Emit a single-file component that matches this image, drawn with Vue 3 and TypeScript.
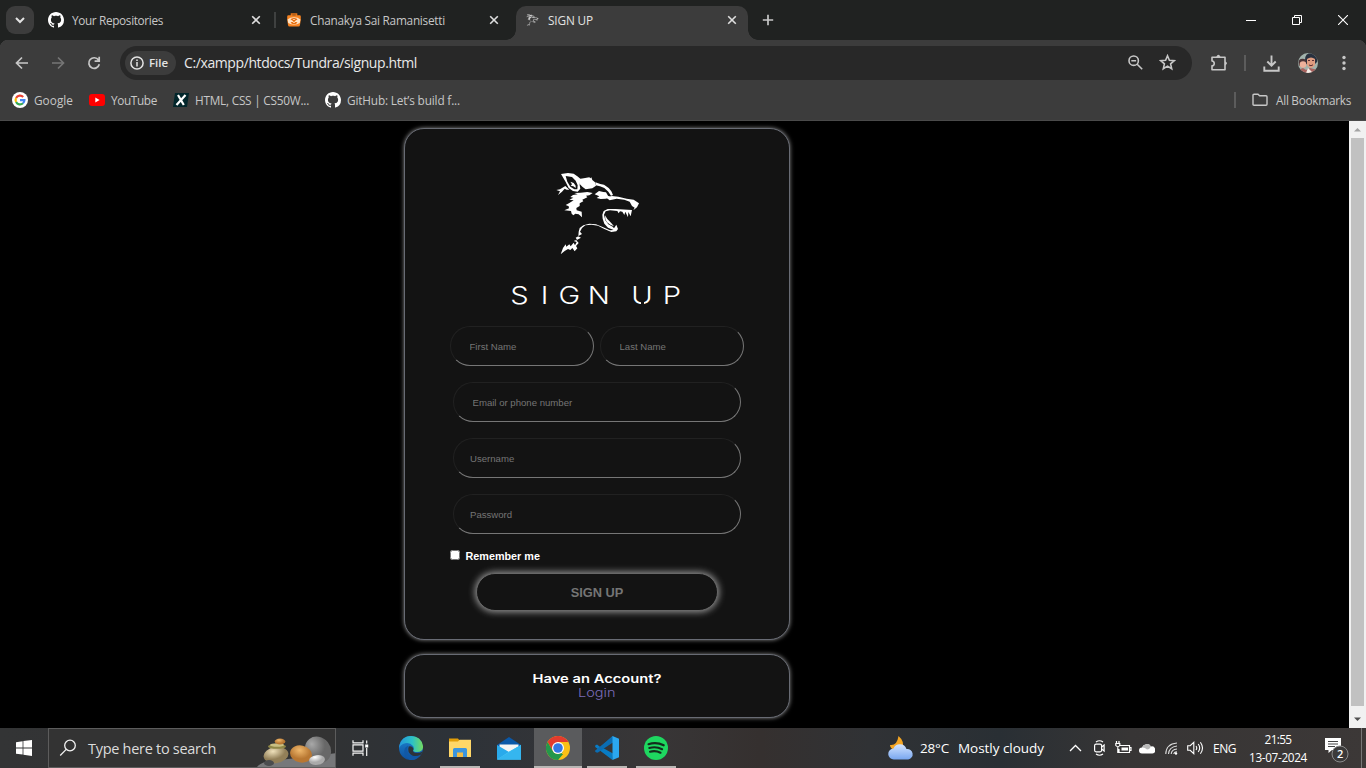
<script setup lang="ts">
import { reactive, type Directive } from 'vue'

interface TabItem { kind: 'github' | 'bag' | 'wolf'; title: string; width: number; active?: boolean }
interface Bookmark { kind: 'google' | 'youtube' | 'edx' | 'github'; label: string; width: number }

const tabs: TabItem[] = [
  { kind: 'github', title: 'Your Repositories', width: 91 },
  { kind: 'bag', title: 'Chanakya Sai Ramanisetti', width: 135 },
  { kind: 'wolf', title: 'SIGN UP', width: 45, active: true },
]
const bookmarks: Bookmark[] = [
  { kind: 'google', label: 'Google', width: 39 },
  { kind: 'youtube', label: 'YouTube', width: 46 },
  { kind: 'edx', label: 'HTML, CSS | CS50W...', width: 114 },
  { kind: 'github', label: 'GitHub: Let’s build f...', width: 113 },
]
const form = reactive({ first: '', last: '', contact: '', user: '', pass: '', remember: false })

// Tracks a label so that it fills the given width.
const vFit: Directive<HTMLElement, number> = {
  mounted(el, { value }) {
    const natural = el.getBoundingClientRect().width
    const count = (el.textContent ?? '').trim().length
    el.style.letterSpacing = `${(value - natural) / count}px`
  },
}

const githubPath =
  'M8 0C3.58 0 0 3.58 0 8c0 3.54 2.29 6.53 5.47 7.59.4.07.55-.17.55-.38 0-.19-.01-.82-.01-1.49-2.01.37-2.53-.49-2.69-.94-.09-.23-.48-.94-.82-1.13-.28-.15-.68-.52-.01-.53.63-.01 1.08.58 1.23.82.72 1.21 1.87.87 2.33.66.07-.52.28-.87.51-1.07-1.78-.2-3.64-.89-3.64-3.95 0-.87.31-1.59.82-2.15-.08-.2-.36-1.02.08-2.12 0 0 .67-.21 2.2.82.64-.18 1.32-.27 2-.27s1.36.09 2 .27c1.53-1.04 2.2-.82 2.2-.82.44 1.1.16 1.92.08 2.12.51.56.82 1.27.82 2.15 0 3.07-1.87 3.75-3.65 3.95.29.25.54.73.54 1.48 0 1.07-.01 1.93-.01 2.2 0 .21.15.46.55.38A8.01 8.01 0 0 0 16 8c0-4.42-3.58-8-8-8z'

const wolfPaths: string[] = [
  'M63 42L84 39L101 41L112 49L121 56L119 75L121 86L113 95L99 93L86 84L77 66ZM77 48L82 65L91 80L103 88L112 88L113 76L107 62L96 51Z',
  'M91 65L101 69L107 77L107 84L100 79L92 77L96 73Z',
  'M117 57L131 55L148 52L151 55L154 52L157 60L165 67L168 77L157 85L137 88L127 80L119 72Z',
  'M166 67L181 72L192 74L206 84L214 94L219 105L213 107L205 95L193 84L180 79L167 76Z',
  'M164 103L177 93L190 96L198 97L204 107L213 112L197 116L182 117L170 114L178 109Z',
  'M197 112L216 108L235 110L260 116L281 119L297 130L291 142L280 151L284 143L276 138L269 125L253 119L230 116L209 121Z',
  'M49 90L60 88L76 78L88 89L80 89L74 86L66 95L54 105L60 94Z',
  'M91 111L99 105L113 103L103 99L122 98L142 96L158 99L148 106L138 107L142 112L127 119L130 124L119 130L119 138L109 144L110 151L125 155L126 172L116 163L106 161L100 166L95 161L93 153L73 151L87 145L86 139L77 135L88 129L101 121L88 119L100 113Z',
  'M187 164L191 153L203 147L227 147L276 150L272 169L265 156L264 172L256 155L253 165L247 155L240 154L236 160L232 153L210 151L197 154L192 164L196 181L205 193L218 200L222 205L229 194L234 207L229 214L214 216L193 207L174 197L155 194L136 196L126 204L120 215L126 222L114 229L123 233L109 241L116 249L108 258L112 265L104 274L97 264L91 270L84 267L74 273L62 283L69 264L77 253L79 260L88 253L92 259L101 248L105 256L110 246L101 243L111 239L107 233L115 229L116 215L119 204L130 196L148 191L168 193L188 201L210 211L221 210L204 203L193 191L188 176Z',
  'M195 166L202 177L213 188L222 199L211 194L201 187L196 178Z',
]
</script>

<template>
  <div class="screen">
    <div class="tabstrip">
      <button class="chev"><svg width="12" height="12" viewBox="0 0 12 12"><path d="M2 4l4 4 4-4" fill="none" stroke="#e3e3e3" stroke-width="2" /></svg></button>
      <div v-for="t in tabs" :key="t.title" class="tab" :class="[t.kind, { active: t.active }]">
        <span class="fav">
          <svg v-if="t.kind === 'github'" width="16" height="16" viewBox="0 0 16 16"><path :d="githubPath" fill="#fff" /></svg>
          <svg v-else-if="t.kind === 'bag'" width="14" height="14" viewBox="0 0 14 14">
            <path d="M4.5 3V1h5v2" fill="none" stroke="#e87516" stroke-width="1.6" />
            <path d="M1.500 2.200h11q1.300 0 1.300 1.300v3.300L13 12q-.2 1.500-1.500 1.500h-9Q1.200 13.500 1 12L.2 6.800V3.500q0-1.300 1.300-1.300z" fill="#f58220" />
            <path d="M.6 6.500Q3 4.300 7 4.300t6.400 2.200l-.6 3.500Q10 11.500 7 11.500T1.200 10z" fill="#ffe3c4" />
            <path d="M4.500 6.300q2.500-1.500 5 0l-5 3.400q2.500 1.700 5 0z" fill="none" stroke="#e66c0d" stroke-width="1.100" />
          </svg>
          <svg v-else width="13" height="12" viewBox="45 35 256 252"><path v-for="d in wolfPaths" :key="d" :d="d" fill="#d2d2d2" fill-rule="evenodd" stroke="#bdbdbd" stroke-width="4" /></svg>
        </span>
        <span class="title"><span v-fit="t.width">{{ t.title }}</span></span>
        <svg class="x" width="10" height="10" viewBox="0 0 10 10"><path d="M1.2 1.2l7.6 7.6M8.8 1.2L1.2 8.8" stroke="#dedede" stroke-width="1.6" /></svg>
      </div>
      <svg class="plus" width="12" height="12" viewBox="0 0 12 12"><path d="M6 .8v10.4M.8 6h10.4" stroke="#c7c7c7" stroke-width="1.7" /></svg>
      <div class="wincontrols">
        <span><svg width="10" height="10" viewBox="0 0 10 10"><path d="M0 5.5h10" stroke="#fff" /></svg></span>
        <span><svg width="10" height="10" viewBox="0 0 10 10" fill="none" stroke="#fff"><path d="M.5 2.5h7v7h-7zM2.5 2.5v-2h7v7h-2" /></svg></span>
        <span><svg width="10" height="10" viewBox="0 0 10 10"><path d="M0 0l10 10M10 0L0 10" stroke="#fff" stroke-width="1.1" /></svg></span>
      </div>
    </div>

    <div class="toolbar">
      <span class="slot"><svg width="14" height="14" viewBox="0 0 14 14" fill="none" stroke="#c7c7c7" stroke-width="1.7"><path d="M13 7H2M7 1.5L1.5 7 7 12.5" /></svg></span>
      <span class="slot"><svg width="14" height="14" viewBox="0 0 14 14" fill="none" stroke="#757575" stroke-width="1.7"><path d="M1 7h11M7 1.5L12.5 7 7 12.5" /></svg></span>
      <span class="slot"><svg width="14" height="14" viewBox="0 0 14 14" fill="none" stroke="#c7c7c7" stroke-width="1.7"><path d="M11.5 4A5.3 5.3 0 1 0 12.3 8.3M12.2.7v4.5H7.6" /></svg></span>
      <div class="omnibox">
        <div class="chip">
          <svg width="14" height="14" viewBox="0 0 14 14"><circle cx="7" cy="7" r="6.1" fill="none" stroke="#e3e3e3" stroke-width="1.5" /><path d="M7 6v4.4M7 3.4v1.5" stroke="#e3e3e3" stroke-width="1.5" /></svg>
          <b v-fit="19">File</b>
        </div>
        <span class="url"><span v-fit="233">C:/xampp/htdocs/Tundra/signup.html</span></span>
        <svg class="lens" width="15" height="15" viewBox="0 0 15 15" fill="none" stroke="#c7c7c7" stroke-width="1.6"><circle cx="5.7" cy="5.7" r="4.7" /><path d="M9.2 9.2l5 5M3.3 5.7h4.8" /></svg>
        <svg class="star" width="17" height="17" viewBox="0 0 17 17" fill="none" stroke="#c7c7c7" stroke-width="1.6"><path d="M8.5 1.8l1.9 4.500 4.9.4-3.700 3.200 1.100 4.800-4.200-2.600-4.200 2.600 1.100-4.800-3.700-3.200 4.900-.4z" /></svg>
      </div>
      <span class="slot puzzle"><svg width="18" height="18" viewBox="0 0 18 18"><path d="M2 3.2h13v12.5H2v-3.9c3-.3 3-4.5 0-4.8z" fill="none" stroke="#c7c7c7" stroke-width="1.6" stroke-linejoin="round" /><path d="M6.2 3q2.2-4.5 4.4 0zM15 7.3q4 2 0 4.2z" fill="#c7c7c7" /></svg></span>
      <i class="divider"></i>
      <span class="slot down"><svg width="17" height="17" viewBox="0 0 17 17" fill="none" stroke="#c7c7c7" stroke-width="1.9"><path d="M8.5.5v10M4.3 6.500l4.200 4.200 4.200-4.200M1.300 11.500v4.200h14.400v-4.200" /></svg></span>
      <span class="slot">
        <svg width="20" height="20" viewBox="0 0 20 20"><defs><clipPath id="av"><circle cx="10" cy="10" r="10" /></clipPath></defs><g clip-path="url(#av)"><path d="M0 0h20v20H0z" fill="#a2b3ac" /><path d="M7 7q0-7 6-7 7 0 6 9l-2 2H8z" fill="#28303e" /><path d="M9 6q4-3 8 0v6q-4 6-8 0z" fill="#df9c80" /><path d="M10 7.5h2m2 0h2M11 12q2 1.5 4-.2" stroke="#5d3034" fill="none" /><circle cx="4.5" cy="9.7" r="4" fill="#4b3437" /><circle cx="5" cy="11.5" r="3.3" fill="#edb19b" /><path d="M0 20v-3l5-2 3 2 4-2 8 2v3z" fill="#a8625e" /><path d="M8 20l2-5 5 5z" fill="#f4eee9" /></g></svg>
      </span>
      <span class="slot"><svg width="4" height="16" viewBox="0 0 4 16" fill="#c7c7c7"><circle cx="2" cy="2.5" r="1.7" /><circle cx="2" cy="8" r="1.7" /><circle cx="2" cy="13.5" r="1.7" /></svg></span>
    </div>

    <div class="bookmarks">
      <div v-for="b in bookmarks" :key="b.label" class="bm">
        <svg v-if="b.kind === 'google'" width="16" height="16" viewBox="0 0 16 16" fill="none" stroke-width="2.2"><circle cx="8" cy="8" r="8" fill="#fff" stroke="none" /><path d="M11.2 5A4.4 4.4 0 0 0 4.1 6" stroke="#ea4335" /><path d="M4.1 6a4.4 4.4 0 0 0 0 4" stroke="#fbbc05" /><path d="M4.1 10a4.4 4.4 0 0 0 6.9 1.2" stroke="#34a853" /><path d="M11 11.2A4.4 4.4 0 0 0 12.4 8.2H8" stroke="#4285f4" /></svg>
        <svg v-else-if="b.kind === 'youtube'" width="16" height="16" viewBox="0 0 16 16"><rect y="2" width="16" height="12" rx="3" fill="#f00" /><path d="M6.3 5.5v5L10.6 8z" fill="#fff" /></svg>
        <svg v-else-if="b.kind === 'edx'" width="16" height="16" viewBox="0 0 16 16"><path d="M2 1h14l-2 14H0z" fill="#02262b" /><path d="M5 3l5.8 10M12.5 3L3.5 13" stroke="#fff" stroke-width="2.2" /></svg>
        <svg v-else width="16" height="16" viewBox="0 0 16 16"><path :d="githubPath" fill="#fff" /></svg>
        <span v-fit="b.width">{{ b.label }}</span>
      </div>
      <i class="divider bdiv"></i>
      <div class="bm all">
        <svg width="16" height="14" viewBox="0 0 16 14"><path d="M1 2.2q0-1 1-1h4l1.6 1.6H14q1 0 1 1v7.5q0 1-1 1H2q-1 0-1-1z" fill="none" stroke="#c7c7c7" stroke-width="1.4" /></svg>
        <span v-fit="75">All Bookmarks</span>
      </div>
    </div>

    <main class="page">
      <div class="content">
        <form class="card signup" @submit.prevent>
          <svg class="wolf-logo" width="115" height="105" viewBox="0 0 345 315"><path v-for="d in wolfPaths" :key="d" :d="d" fill="#fff" fill-rule="evenodd" /></svg>
          <svg class="heading" width="190" height="40" viewBox="0 0 190 40">
            <text transform="translate(5 30.5) scale(1.19 1)" x="1 26.600 41.500 66.200 85 102.800 129.200" y="0">SIGN UP</text>
            <path d="M137 28h3v5h-3z" fill="#131313" />
          </svg>
          <div class="names">
            <input v-model="form.first" placeholder="First Name" />
            <input v-model="form.last" placeholder="Last Name" />
          </div>
          <input v-model="form.contact" class="wide" placeholder="Email or phone number" />
          <input v-model="form.user" class="wide near" placeholder="Username" />
          <input v-model="form.pass" class="wide near" type="password" placeholder="Password" />
          <label class="remember"><input v-model="form.remember" type="checkbox" />Remember me</label>
          <button class="submit">SIGN UP</button>
        </form>
        <div class="card account">
          <svg width="140" height="32" viewBox="0 0 140 32">
            <text class="have" x="5.5" y="13" textLength="129" lengthAdjust="spacingAndGlyphs">Have an Account?</text>
            <text class="login" x="51" y="27" textLength="37.5" lengthAdjust="spacingAndGlyphs">Login</text>
          </svg>
        </div>
      </div>
      <div class="scrollbar">
        <svg width="17" height="17" viewBox="0 0 17 17"><path d="M5 10.5h7L8.5 7z" fill="#a3a3a3" /></svg>
        <i class="thumb"></i>
        <svg width="17" height="17" viewBox="0 0 17 17"><path d="M5 7.500h7L8.500 11z" fill="#505050" /></svg>
      </div>
    </main>

    <footer class="taskbar">
      <span class="start"><svg width="16" height="16" viewBox="0 0 16 16" fill="#fff"><path d="M0 2.2l6.6-.9v6.2H0zM7.4 1.1L16 0v7.5H7.4zM0 8.4h6.6v6.2L0 13.7zM7.4 8.4H16V16l-8.6-1.2z" /></svg></span>
      <div class="search">
        <svg class="glass" width="18" height="18" viewBox="0 0 18 18" fill="none" stroke="#f2f2f2" stroke-width="1.3"><circle cx="11" cy="6.5" r="5.3" /><path d="M7.2 10.4L1.2 16.5" /></svg>
        <span class="search-text"><span v-fit="128">Type here to search</span></span>
        <svg class="stones" width="80" height="38" viewBox="0 0 80 38">
          <defs>
            <radialGradient id="s1" cx=".4" cy=".25"><stop stop-color="#eee0ba" /><stop offset="1" stop-color="#927f58" /></radialGradient>
            <radialGradient id="s2" cx=".4" cy=".3"><stop stop-color="#efb86c" /><stop offset="1" stop-color="#b87732" /></radialGradient>
            <radialGradient id="s3" cx=".45" cy=".2"><stop stop-color="#a8a8a8" /><stop offset="1" stop-color="#686868" /></radialGradient>
            <radialGradient id="s4" cx=".4" cy=".2"><stop stop-color="#fff" /><stop offset="1" stop-color="#aaa" /></radialGradient>
          </defs>
          <path d="M0 38q4-6 22-7l36-4 22-3v14z" fill="#77787a" />
          <ellipse cx="61" cy="21" rx="12.500" ry="14" transform="rotate(-38 61 21)" fill="url(#s3)" />
          <ellipse cx="44" cy="25" rx="11" ry="8.500" transform="rotate(12 44 25)" fill="url(#s2)" />
          <ellipse cx="19" cy="26" rx="12.5" ry="8" transform="rotate(-8 19 26)" fill="url(#s1)" />
          <ellipse cx="20" cy="17.500" rx="9" ry="2.300" fill="#8f8747" />
          <ellipse cx="20" cy="16" rx="7" ry="1.800" fill="#c9bf83" />
          <ellipse cx="23" cy="12.500" rx="5.300" ry="3" fill="url(#s2)" />
          <ellipse cx="12" cy="34" rx="5" ry="3" fill="#4b4c4e" />
          <ellipse cx="60" cy="31" rx="8" ry="4.900" transform="rotate(-8 60 31)" fill="url(#s4)" />
        </svg>
      </div>
      <span class="app taskview"><svg width="17" height="16" viewBox="0 0 17 16" fill="none" stroke="#f5f5f5" stroke-width="1.2"><path d="M1 .2v2.6h10V.2M1 4.8h10v6.4H1zM1 15.8v-2.6h10v2.600M14.7.5v3M14.7 8v8" /><path d="M13.2 4.5h3v3h-3z" fill="#fff" stroke="none" /></svg></span>
      <span class="app edge">
        <svg width="24" height="24" viewBox="0 0 24 24">
          <defs><linearGradient id="e1" x2="1"><stop stop-color="#2496dc" /><stop offset=".55" stop-color="#2cc1c6" /><stop offset="1" stop-color="#74db5e" /></linearGradient><linearGradient id="e2" y2="1" x2="0"><stop stop-color="#1e85d2" /><stop offset="1" stop-color="#0d4f9e" /></linearGradient></defs>
          <circle cx="12" cy="12" r="12" fill="url(#e2)" />
          <path d="M.5 9Q3 0 12 0q10 0 12 10 .5 6-6 6-4 0-4-2 1.5-2 0-4-4-5-10-2Q1.5 9 .1 12z" fill="url(#e1)" />
          <path d="M9 9.5q-2 8 3 11 4.500 2 9-.8Q17 24.500 11 24 4.500 20 5.300 14.500 6 11 9 9.500z" fill="#1158a6" />
          <path d="M9.700 10.500q3-.9 4.600 1.700.6 1.500-.3 2.600-.2 1.800 3.500 2.300 3 .2 6-1.600l-1.300 3q-5 2.500-9 .9-5.500-3-3.500-8.900z" fill="#2d333a" />
        </svg>
      </span>
      <span class="app open">
        <svg width="22" height="20" viewBox="0 0 22 20"><path d="M0 .5h9l1.500 2H21V7H0z" fill="#e29e08" /><path d="M0 3.500h9l1.500-1.700H22V19H0z" fill="#ffd768" /><path d="M4 19v-7.500q0-1.500 1.500-1.500h11q1.500 0 1.500 1.500V19h-4v-4H8v4z" fill="#3b95df" /><path d="M8 14.500h6V19H8z" fill="#f2bc45" /></svg>
      </span>
      <span class="app mail"><svg width="24" height="23" viewBox="0 0 24 23"><path d="M0 8L12 0l12 8v3H0z" fill="#0a58a8" /><path d="M2.500 7.500h19V15h-19z" fill="#f4f4f4" /><path d="M0 8l12 7 12-7v14.500H0z" fill="#29aaeb" /><path d="M0 22.500L13 14 24 8v14.500z" fill="#46c5f5" /><path d="M0 22.500L24 8v14.500z" fill="#35b6ef" /></svg></span>
      <span class="app open current">
        <svg width="24" height="24" viewBox="0 0 24 24"><circle cx="12" cy="12" r="12" fill="#fbc116" /><path d="M1.600 6A12 12 0 0 1 22.400 6H12L6.800 15z" fill="#e33b2e" /><path d="M1.600 6l5.200 9A6 6 0 0 0 12 18h5.200L12 24A12 12 0 0 1 1.600 6z" fill="#24974b" /><path d="M12 24l5.200-9L14 17l-4 1z" fill="#24974b" /><circle cx="12" cy="12" r="6" fill="#fff" /><circle cx="12" cy="12" r="4.800" fill="#3478e5" /></svg>
      </span>
      <span class="app open">
        <svg width="24" height="24" viewBox="0 0 24 24"><path d="M17.500 0L5.500 11.200 2 8.500.200 9.400v1.500L17.500 24l.5-6.500-10-5.500 10-5.800z" fill="#087cc5" /><path d="M.2 14.500L18 0l.5 6L3 16.500l-1 .2-1.800-.9z" fill="#0b6db3" /><path d="M17.500 0L24 2.800v18.400L17.500 24z" fill="#2ba7f0" /></svg>
      </span>
      <span class="app open">
        <svg width="24" height="24" viewBox="0 0 24 24"><circle cx="12" cy="12" r="12" fill="#1ed760" /><path d="M4.500 8.200Q12.500 5.700 19.700 9.300M5.300 12q6.700-2 12.800 1.200M6 15.700q5.500-1.600 10.500 1" fill="none" stroke="#142b1c" stroke-width="2.100" stroke-linecap="round" /></svg>
      </span>

      <div class="weather">
        <svg width="26" height="24" viewBox="0 0 26 24"><defs><linearGradient id="cl" y2="1" x2="0"><stop stop-color="#d3e4ff" /><stop offset="1" stop-color="#78a6ef" /></linearGradient></defs><path d="M10.500 0q7 6 3.500 13L6 14Q2 12 2 9q7 1 8.500-9z" fill="#f5a623" /><path d="M6 23.500a5.500 5.500 0 0 1-.5-11A7 7 0 0 1 18.500 13a5.300 5.300 0 0 1 1.700 10.500z" fill="url(#cl)" /></svg>
        <span class="temp"><span v-fit="29">28°C</span></span>
        <span v-fit="86">Mostly cloudy</span>
      </div>
      <div class="tray">
        <span><svg width="13" height="8" viewBox="0 0 13 8"><path d="M1 7l5.500-5.500L12 7" fill="none" stroke="#fff" stroke-width="1.300" /></svg></span>
        <span><svg width="14" height="16" viewBox="0 0 14 16" fill="none" stroke="#fff" stroke-width="1.200"><rect x="2.600" y="4.200" width="7" height="7.600" rx="1.500" /><path d="M9.600 7l2.500-2v6l-2.500-2M4 2q3.500-2.500 7 0M4 14q3.500 2.500 7 0" /></svg></span>
        <span><svg width="17" height="14" viewBox="0 0 17 14" fill="none" stroke="#fff" stroke-width="1.200"><path d="M5 4.500h9.500v7H4V8M14.500 6.500H16v3h-1.500M1.500 0v2M4 0v2M.8 2.500h4v2q-2 2.500-4 0zM2.800 6v5.500h2" /><path d="M6.500 6.500H13v3H6.500z" fill="#fff" stroke="none" /></svg></span>
        <span><svg width="16" height="11" viewBox="0 0 16 11"><path d="M3 10.500a3 3 0 0 1 0-6A5 5 0 0 1 12 3.500a3.500 3.500 0 0 1 1.500 7z" fill="#fff" /><path d="M3 4.500A5 5 0 0 1 12 3.500q-1 2.500-4 3Q5.500 4 3 4.500z" fill="#b9b9b9" /></svg></span>
        <span><svg width="13" height="13" viewBox="0 0 13 13" fill="none" stroke="#ddd" stroke-width="1.100"><path d="M.8 12Q1 2 12 1M3.500 12Q4 5 12 4M6.200 12Q6.500 7.500 12 7M8.800 12Q9 10 12 9.700" /><circle cx="11" cy="11.500" r="1.200" fill="#fff" stroke="none" /></svg></span>
        <span><svg width="17" height="14" viewBox="0 0 17 14" fill="none" stroke="#fff" stroke-width="1.100"><path d="M.7 4.700h2.500l3.600-3.400v11.400L3.200 9.300H.7zM9 5q1.500 2 0 4M11.200 3q3 4 0 8M13.400 1.200q4.200 5.800 0 11.600" /></svg></span>
        <span class="lang"><span v-fit="23">ENG</span></span>
      </div>
      <div class="clock"><span v-fit="27">21:55</span><span v-fit="58">13-07-2024</span></div>
      <div class="notice">
        <svg width="26" height="26" viewBox="0 0 26 26"><path d="M1 1h16v12H8l-3.500 3V13H1z" fill="#fff" /><path d="M4 4.500h10M4 7h10M4 9.500h7" stroke="#444" /><circle cx="16" cy="17" r="8" fill="#3b3a3a" stroke="#8b8b8b" /><text x="13" y="21" font-size="11" fill="#fff" font-weight="600">2</text></svg>
      </div>
      <i class="peek"></i>
    </footer>
  </div>
</template>

<style>
body { background: #000; overflow: hidden; }
</style>

<style scoped>
* { box-sizing: border-box; }
.screen { width: 1366px; height: 768px; overflow: hidden; display: flex; flex-direction: column; background: #000; font-family: "Open Sans", "Noto Sans", sans-serif; font-size: 11.8px; color: #c7c7c7; white-space: nowrap; }
svg { display: block; flex: none; }
.screen span, .screen b { flex: none; }
button { font: inherit; padding: 0; border: 0; }
.tabstrip { height: 40px; flex: none; display: flex; background: #202221; }
.chev { width: 28px; height: 28px; margin: 6px 6px 0; border-radius: 9px; background: #3c3c3c; display: grid; place-items: center; }
.tab { height: 34px; margin-top: 6px; display: flex; align-items: center; padding-bottom: 6px; position: relative; }
.tab.github { width: 236px; padding-left: 8px; }
.tab.bag { width: 240px; padding-left: 11px; }
.tab.wolf { width: 232px; padding-left: 10px; background: #3c3c3c; border-radius: 10px 10px 0 0; color: #e3e3e3; }
.tab.github::after { content: ""; position: absolute; right: 0; top: 6px; width: 2px; height: 16px; background: #3f4140; }
.tab.active::before, .tab.active::after { content: ""; position: absolute; bottom: 0; width: 10px; height: 10px; }
.tab.active::before { left: -10px; background: radial-gradient(circle at 0 0, transparent 9.5px, #3c3c3c 10px); }
.tab.active::after { right: -10px; background: radial-gradient(circle at 100% 0, transparent 9.5px, #3c3c3c 10px); }
.fav { width: 24px; }
.bag .fav { width: 23px; }
.wolf .fav { width: 22px; }
.title { width: 179px; }
.plus { margin: 14px 0 0 14px; }
.wincontrols { margin-left: auto; display: flex; }
.wincontrols span { width: 46px; display: grid; place-items: center; }
.toolbar { height: 40px; flex: none; display: flex; align-items: center; padding: 6px 0 0 4px; background: #3c3c3c; border-radius: 8px 8px 0 0; }
.screen > .toolbar { background: radial-gradient(circle at 8px 8px, #3c3c3c 8px, #202221 8.500px) 0 0 / 8px 8px no-repeat, radial-gradient(circle at 0 8px, #3c3c3c 8px, #202221 8.500px) 100% 0 / 8px 8px no-repeat, #3c3c3c; border-radius: 0; }
.slot { width: 36px; display: grid; place-items: center; }
.omnibox { width: 1072px; height: 34px; margin-left: 8px; border-radius: 17px; background: #282828; display: flex; align-items: center; padding-left: 5px; }
.chip { width: 51px; height: 24px; border-radius: 12px; background: #3c3c3c; color: #e3e3e3; display: flex; align-items: center; padding-left: 5px; gap: 5px; font-size: 11.5px; }
.chip b { font-weight: 600; margin-top: -1px; }
.url { width: 944px; margin: -2px 0 0 8px; font-size: 14px; color: #e9e9e9; }
.lens { margin: -1px 0 0; }
.star { margin: -1px 0 0 16px; }
.puzzle { margin-left: 9px; }
.divider { width: 2px; height: 16px; background: #5c5c5c; flex: none; }
.toolbar .divider { margin-left: 7px; }
.down { margin-left: 7px; margin-right: 1px; }
.bookmarks { height: 41px; flex: none; display: flex; align-items: center; padding: 0 15px 1px 12px; background: #3c3c3c; border-bottom: 1px solid #4a4a4a; gap: 16px; }
.bm { display: flex; align-items: center; gap: 6px; }
.bdiv { margin-left: auto; }
.all { gap: 8px; }
.page { height: 607px; flex: none; display: flex; background: #000; }
.content { width: 1349px; padding: 7px 0 0 404px; display: flex; flex-direction: column; gap: 14px; }
.card { width: 386px; border: 1px solid #686b74; border-radius: 20px; background: #131313; box-shadow: 0 0 4px #888; font-family: "Liberation Sans", Arial, sans-serif; }
.signup { height: 512px; padding: 31px 0 0 45px; display: flex; flex-direction: column; align-items: flex-start; }
.wolf-logo { margin-left: 90px; }
.heading { margin: 8px 0 0 54px; }
.heading text { font: 350 24.5px Inter, sans-serif; fill: #fff; }
.names { display: flex; gap: 6px; margin-top: 13px; }
.signup input:not([type="checkbox"]) { width: 144px; height: 40px; border: 1px solid; border-color: #212121 #767676 #767676 #212121; border-radius: 20px; background: transparent; padding: 1px 18.500px; color: #ccc; outline: 0; font: 9.6px "Liberation Sans", Arial, sans-serif; }
input::placeholder { color: #757575; opacity: 1; }
.signup input.wide { width: 288px; margin: 16px 0 0 3px; }
.signup input.near { padding-left: 16px; }
.remember { display: flex; align-items: center; height: 14px; margin-top: 15px; color: #fff; font-size: 10.8px; font-weight: 700; }
.remember input { width: 10px; height: 10px; margin: -2px 5.500px 0 0; }
.submit { width: 242px; height: 38px; margin: 10px 0 0 26px; border-radius: 19px; border: 1px solid #676767; background: #131313; box-shadow: 0 0 7px 1px #999; color: #757575; font: 700 12.8px "Liberation Sans", Arial, sans-serif; }
.account { height: 64px; padding: 15px 0 0 122px; }
.have { font: 600 11.5px Inter, sans-serif; fill: #fff; }
.login { font: 350 11.5px Inter, sans-serif; fill: #7a6bb7; }
.scrollbar { width: 17px; background: #f1f1f1; display: flex; flex-direction: column; align-items: center; }
.thumb { width: 13px; height: 568px; background: #c1c1c1; }
.scrollbar svg:last-child { margin-top: 4px; }
.taskbar { height: 40px; flex: none; display: flex; align-items: center; color: #fff; font-size: 13.500px; background: linear-gradient(90deg, #333435 0, #303234 340px, #2d3238 450px, #383637 650px, #35302f 760px, #303235 870px, #292f34 1000px, #373535 1130px, #3c3837 1366px); }
.start { width: 48px; display: grid; place-items: center; }
.search { width: 288px; height: 40px; border: 1px solid #5c5c5c; background: #333; display: flex; align-items: center; flex: none; overflow: hidden; }
.glass { margin-left: 10px; }
.search-text { width: 168px; margin-left: 11px; color: #dcdcdc; font-size: 14.500px; }
.stones { margin-left: 1px; }
.app { width: 49px; height: 40px; display: grid; place-items: center; position: relative; }
.taskview { width: 50px; padding-right: 1px; }
.mail { width: 50px; padding-right: 1px; }
.open::after { content: ""; position: absolute; left: 5px; bottom: 0; width: 40px; height: 2px; background: #b9b7b5; }
.current { width: 48px; background: #5a5b5d; }
.current::after { left: 0; width: 48px; }
.weather { margin-left: 208px; width: 158px; display: flex; align-items: center; flex: none; }
.temp { width: 38px; margin-left: 6px; }
.tray { margin-left: 17px; display: flex; align-items: center; }
.tray > span { width: 24px; display: grid; place-items: center; }
.tray > .lang { width: 35px; font-size: 12px; }
.clock { width: 64px; margin-left: 4px; display: flex; flex-direction: column; align-items: center; font-size: 11.8px; line-height: 18px; padding-bottom: 1px; }
.notice { margin-left: 14px; padding-top: 3px; }
.peek { margin-left: auto; margin-right: 4px; width: 1px; height: 40px; background: #777; }
</style>
